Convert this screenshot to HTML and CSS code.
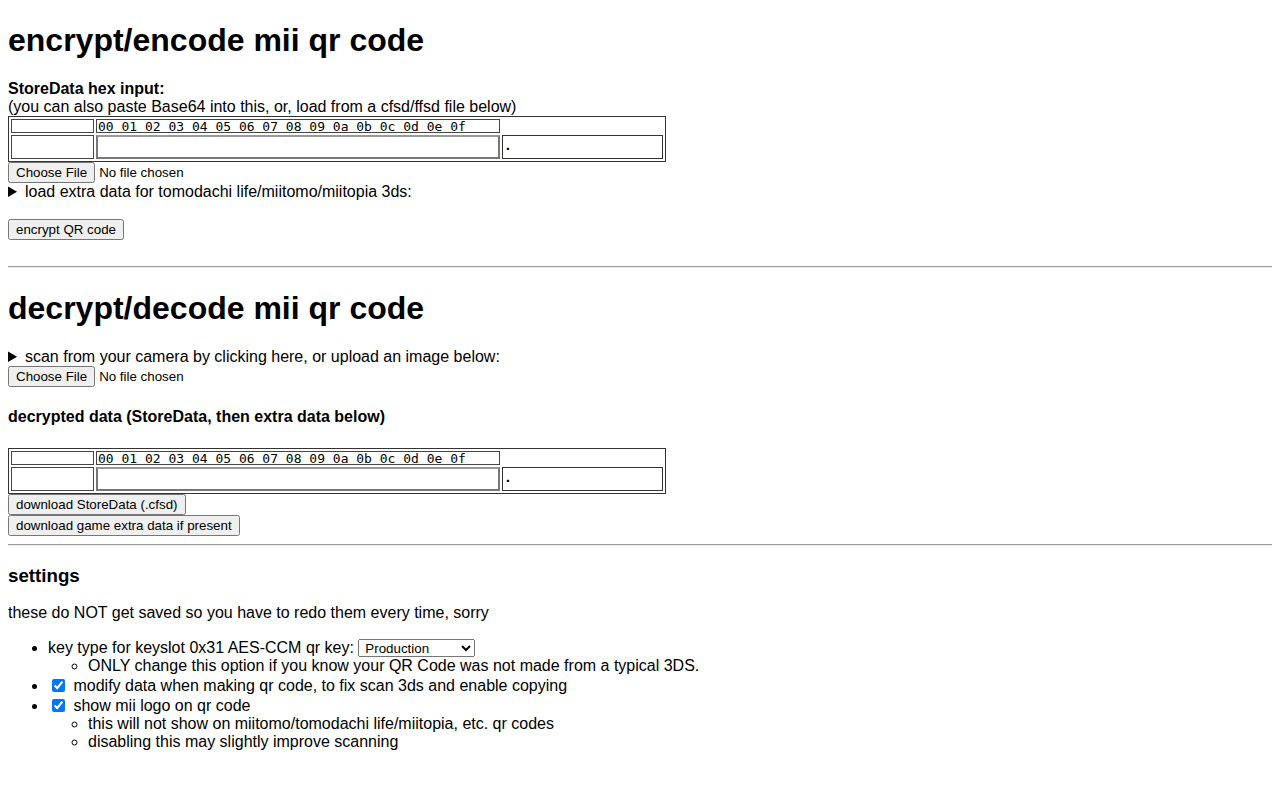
FILE: index.html
```html
<!DOCTYPE html>
<html lang="en">
<head>
    <meta charset="UTF-8">
    <title>mii qr code tool</title>
    <link rel="stylesheet" href="styles.css">
</head>
<body>

    <h1 class="top-title">encrypt/encode mii qr code</h1>
    <b>StoreData hex input:</b><br>
    (you can also paste Base64 into this, or, load from a cfsd/ffsd file below)<br>
    <table class="hex-table">
        <tr>
            <td><input class="offset-head" type="text" readonly></td>
            <td><input class="hex-head" type="text" value="00 01 02 03 04 05 06 07 08 09 0a 0b 0c 0d 0e 0f" readonly></td>
        </tr>
        <tr>
            <td><textarea class="offsets" readonly></textarea></td>
            <td><textarea class="hex-data" spellcheck="false"></textarea></td>
            <td><textarea class="ascii" readonly>.</textarea></td>
        </tr>
    </table>
    <input type="file" class="file-in"><br>
    <details>
        <summary>load extra data for tomodachi life/miitomo/miitopia 3ds:</summary>
    </details>
    <br>
    <button>encrypt QR code</button><br><br>

    <hr>

    <h1>decrypt/decode mii qr code</h1>
    <details>
        <summary>scan from your camera by clicking here, or upload an image below:</summary>
    </details>
    <input type="file" class="file-in">

    <h4>decrypted data (StoreData, then extra data below)</h4>
    <table class="hex-table out">
        <tr>
            <td><input class="offset-head" type="text" readonly></td>
            <td><input class="hex-head" type="text" value="00 01 02 03 04 05 06 07 08 09 0a 0b 0c 0d 0e 0f" readonly></td>
        </tr>
        <tr>
            <td><textarea class="offsets" readonly></textarea></td>
            <td><textarea class="hex-data" readonly></textarea></td>
            <td><textarea class="ascii" readonly>.</textarea></td>
        </tr>
    </table>
    <button>download StoreData (.cfsd)</button><br>
    <button>download game extra data if present</button>

    <hr>

    <h3>settings</h3>
    <p>these do NOT get saved so you have to redo them every time, sorry</p>
    <ul class="settings">
        <li>key type for keyslot 0x31 AES-CCM qr key:
            <select>
                <option>Production</option>
                <option>Development</option>
            </select>
            <ul>
                <li>ONLY change this option if you know your QR Code was not made from a typical 3DS.</li>
            </ul>
        </li>
        <li><input type="checkbox" checked> modify data when making qr code, to fix scan 3ds and enable copying</li>
        <li><input type="checkbox" checked> show mii logo on qr code
            <ul>
                <li>this will not show on miitomo/tomodachi life/miitopia, etc. qr codes</li>
                <li>disabling this may slightly improve scanning</li>
            </ul>
        </li>
    </ul>

</body>
</html>
```

FILE: styles.css
```css
body {
    font-family: "Liberation Sans", Arial, sans-serif;
    font-size: 16px;
    color: #000;
    background: #fff;
}
button, select, input[type=file] {
    font-family: "Liberation Sans", Arial, sans-serif;
    font-size: 13.33px;
}
.top-title {
    margin-top: 14px;
}
hr {
    border: 0;
    border-top: 1px solid #9a9a9a;
    border-bottom: 1px solid #eee;
    margin: 8px 0;
}
h3 {
    margin: 19px 0 17px;
}
h4 {
    margin: 21px 0 22px;
}

/* hex editor grid */
.hex-table {
    border: 1px solid #333;
    border-spacing: 2px;
    width: 658px;
    table-layout: fixed;
}
.hex-table td {
    padding: 0;
    vertical-align: top;
}
.hex-table td:nth-child(1) { width: 83px; }
.hex-table td:nth-child(2) { width: 404px; }
.hex-table input,
.hex-table textarea {
    display: block;
    box-sizing: border-box;
    margin: 0;
    padding: 0 1px;
    font-family: "DejaVu Sans Mono", monospace;
    font-size: 13px;
    resize: none;
    overflow: hidden;
    background: #fff;
    color: #000;
    outline: none;
}
.offset-head, .hex-head {
    height: 14px;
    line-height: 12px;
    border: 1px solid #444;
}
.offset-head { width: 83px; }
.hex-head { width: 404px; }
.offsets, .hex-data, .ascii {
    height: 24px;
    line-height: 20px;
}
.offsets {
    width: 83px;
    border: 1px solid #444;
}
.hex-data {
    width: 404px;
    border: 2px solid #777;
    border-top-color: #999;
}
.ascii {
    width: 161px;
    border: 1px solid #333;
    font-weight: bold;
}

/* settings list */
.settings {
    margin-top: 17px;
}
select {
    width: 117px;
    height: 18px;
    padding: 0 2px;
}
ul ul {
    list-style-type: circle;
}
input[type=checkbox] {
    margin: 4px 4px 3px 4px;
    vertical-align: -1px;
}
```
